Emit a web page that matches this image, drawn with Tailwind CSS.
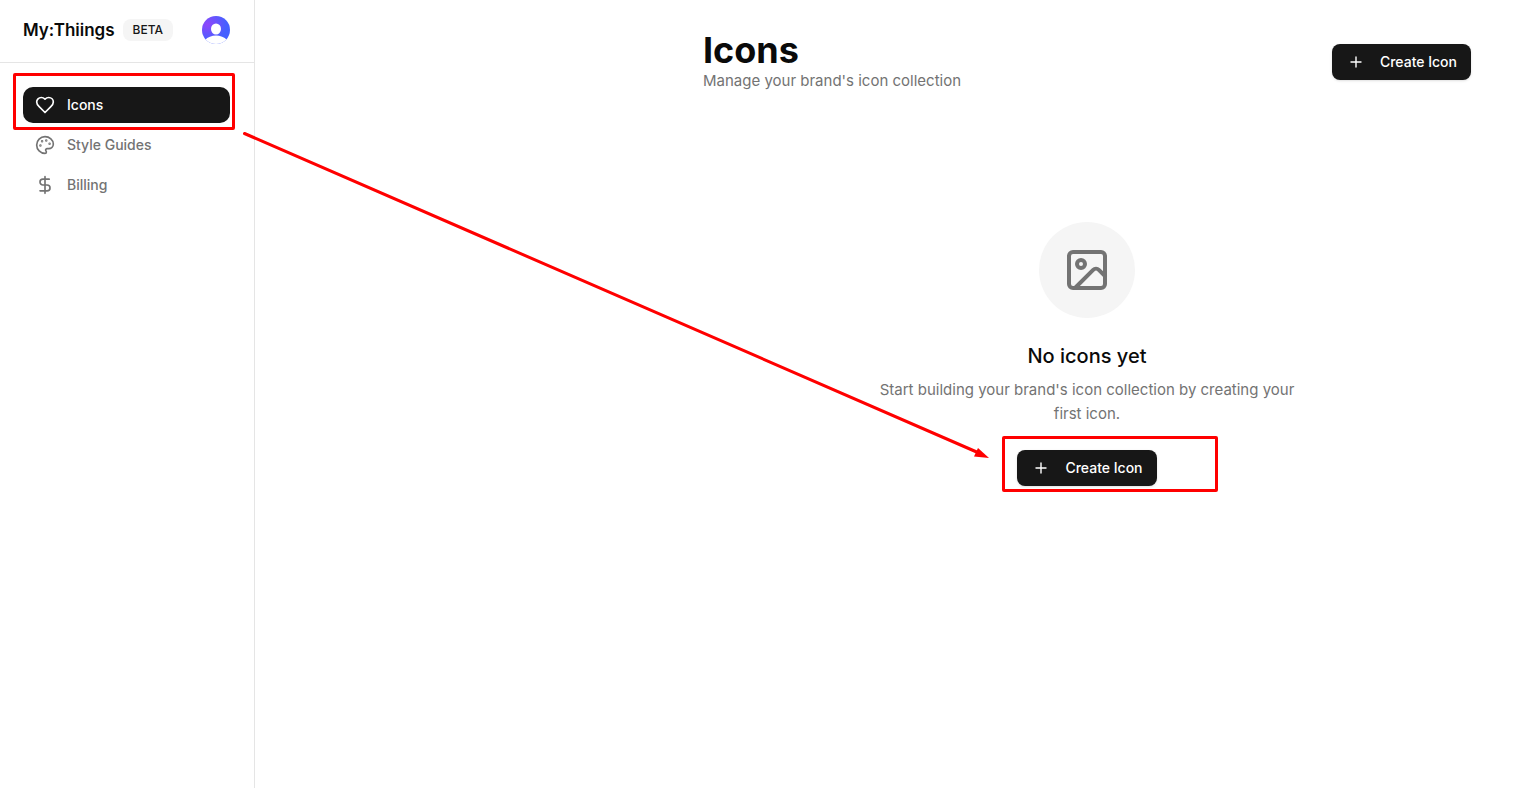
<!DOCTYPE html>
<html lang="en">
<head>
<meta charset="utf-8">
<meta name="viewport" content="width=device-width, initial-scale=1">
<title>My:Thiings</title>
<script src="https://cdn.jsdelivr.net/npm/@tailwindcss/browser@4"></script>
</head>
<body class="relative flex min-h-screen bg-white font-['Inter',sans-serif] text-neutral-950">
<aside class="flex w-[255px] shrink-0 flex-col border-r border-neutral-200">
  <header class="flex h-[63px] items-center border-b border-neutral-200 pr-6 pl-[23px] pb-[3px]">
    <span class="text-[17px] leading-7 font-semibold">My:Thiings</span>
    <span class="ml-2 rounded-lg bg-neutral-100 px-[10px] py-[3px] text-xs leading-4 font-medium text-neutral-900">BETA</span>
    <button type="button" aria-label="Account" class="ml-auto size-7 overflow-hidden rounded-full bg-radial-[at_20%_30%] from-[#9046fb] to-[#4560ff] to-60%">
      <svg class="size-7" viewBox="0 0 28 28" fill="white" aria-hidden="true"><ellipse cx="14" cy="13" rx="5" ry="5.5"/><path d="M3 24C5.500 21 10 19.500 14 19.500S22.500 21 25 24V28H3Z"/></svg>
    </button>
  </header>
  <nav class="relative flex flex-col gap-1 pt-6 pr-6 pl-[23px] text-sm font-medium text-neutral-500">
    <a href="#" aria-current="page" class="flex h-9 items-center gap-3 rounded-[10px] bg-neutral-900 px-3 text-white">
      <svg class="size-5" viewBox="0 0 24 24" fill="none" stroke="currentColor" stroke-width="2" stroke-linecap="round" stroke-linejoin="round" aria-hidden="true"><path d="M19 14c1.490-1.460 3-3.210 3-5.500A5.500 5.500 0 0 0 16.500 3c-1.760 0-3 .5-4.500 2-1.500-1.500-2.740-2-4.500-2A5.500 5.500 0 0 0 2 8.500c0 2.300 1.500 4.050 3 5.500l7 7Z"/></svg>
      Icons
    </a>
    <a href="#" class="flex h-9 items-center gap-3 px-3">
      <svg class="size-5" viewBox="0 0 24 24" fill="none" stroke="currentColor" stroke-width="2" stroke-linecap="round" stroke-linejoin="round" aria-hidden="true"><circle cx="13.500" cy="6.500" r=".5" fill="currentColor"/><circle cx="17.500" cy="10.500" r=".5" fill="currentColor"/><circle cx="8.500" cy="7.500" r=".5" fill="currentColor"/><circle cx="6.500" cy="12.500" r=".5" fill="currentColor"/><path d="M12 2C6.500 2 2 6.500 2 12s4.500 10 10 10c.926 0 1.648-.746 1.648-1.688 0-.437-.18-.835-.437-1.125-.29-.289-.438-.652-.438-1.125a1.640 1.640 0 0 1 1.668-1.668h1.996c3.051 0 5.555-2.503 5.555-5.554C21.965 6.012 17.461 2 12 2z"/></svg>
      Style Guides
    </a>
    <a href="#" class="flex h-9 items-center gap-3 px-3">
      <svg class="size-5" viewBox="0 0 24 24" fill="none" stroke="currentColor" stroke-width="2" stroke-linecap="round" stroke-linejoin="round" aria-hidden="true"><path d="M12 2v20M17 5H9.500a3.500 3.500 0 0 0 0 7h5a3.500 3.500 0 0 1 0 7H6"/></svg>
      Billing
    </a>
    <span class="pointer-events-none absolute top-[10px] left-[13px] h-[57px] w-[222px] rounded-xs border-3 border-[#ff0000]"></span>
  </nav>
</aside>
<main class="flex min-w-0 flex-1 justify-end pt-[31px] pr-[62px] pl-8">
  <div class="w-full max-w-3xl">
    <div class="flex items-center justify-between">
      <div>
        <h1 class="text-4xl leading-[38px] font-bold">Icons</h1>
        <p class="text-[15px] leading-6 text-neutral-500">Manage your brand's icon collection</p>
      </div>
      <button type="button" class="flex h-9 items-center gap-4 rounded-lg bg-neutral-900 pr-[14px] pl-4 text-sm font-medium text-white shadow-sm">
        <svg class="size-4" viewBox="0 0 16 16" fill="none" stroke="currentColor" stroke-width="1.4" stroke-linecap="round" aria-hidden="true"><path d="M3 8h10M8 3v10"/></svg>
        Create Icon
      </button>
    </div>
    <section class="mx-auto mt-[129px] flex max-w-md flex-col items-center text-center">
      <div class="flex size-24 items-center justify-center rounded-full bg-neutral-100 text-neutral-500">
        <svg class="size-12" viewBox="0 0 24 24" fill="none" stroke="currentColor" stroke-width="2" stroke-linecap="round" stroke-linejoin="round" aria-hidden="true"><rect x="3" y="3" width="18" height="18" rx="2"/><circle cx="9" cy="9" r="2"/><path d="m21 15-3.086-3.086a2 2 0 0 0-2.828 0L6 21"/></svg>
      </div>
      <h2 class="mt-6 text-xl leading-7 font-medium">No icons yet</h2>
      <p class="mt-2 px-2 text-[15px] leading-6 text-neutral-500">Start building your brand's icon collection by creating your first icon.</p>
      <div class="relative mt-6">
        <button type="button" class="flex h-9 items-center gap-4 rounded-lg bg-neutral-900 pr-[14px] pl-4 text-sm font-medium text-white shadow-sm">
          <svg class="size-4" viewBox="0 0 16 16" fill="none" stroke="currentColor" stroke-width="1.4" stroke-linecap="round" aria-hidden="true"><path d="M3 8h10M8 3v10"/></svg>
          Create Icon
        </button>
        <span class="pointer-events-none absolute -top-[14px] -left-[15px] h-14 w-[216px] rounded-xs border-3 border-[#ff0000]"></span>
      </div>
    </section>
  </div>
</main>
<svg class="pointer-events-none absolute top-[130px] left-[242px] h-[330px] w-[748px]" viewBox="242 130 748 330" aria-hidden="true"><path d="M244.500 133.500 979 453" fill="none" stroke="#ff0000" stroke-width="3" stroke-linecap="round"/><path d="M989 458 974 456.500 978 448Z" fill="#ff0000"/></svg>
</body>
</html>
